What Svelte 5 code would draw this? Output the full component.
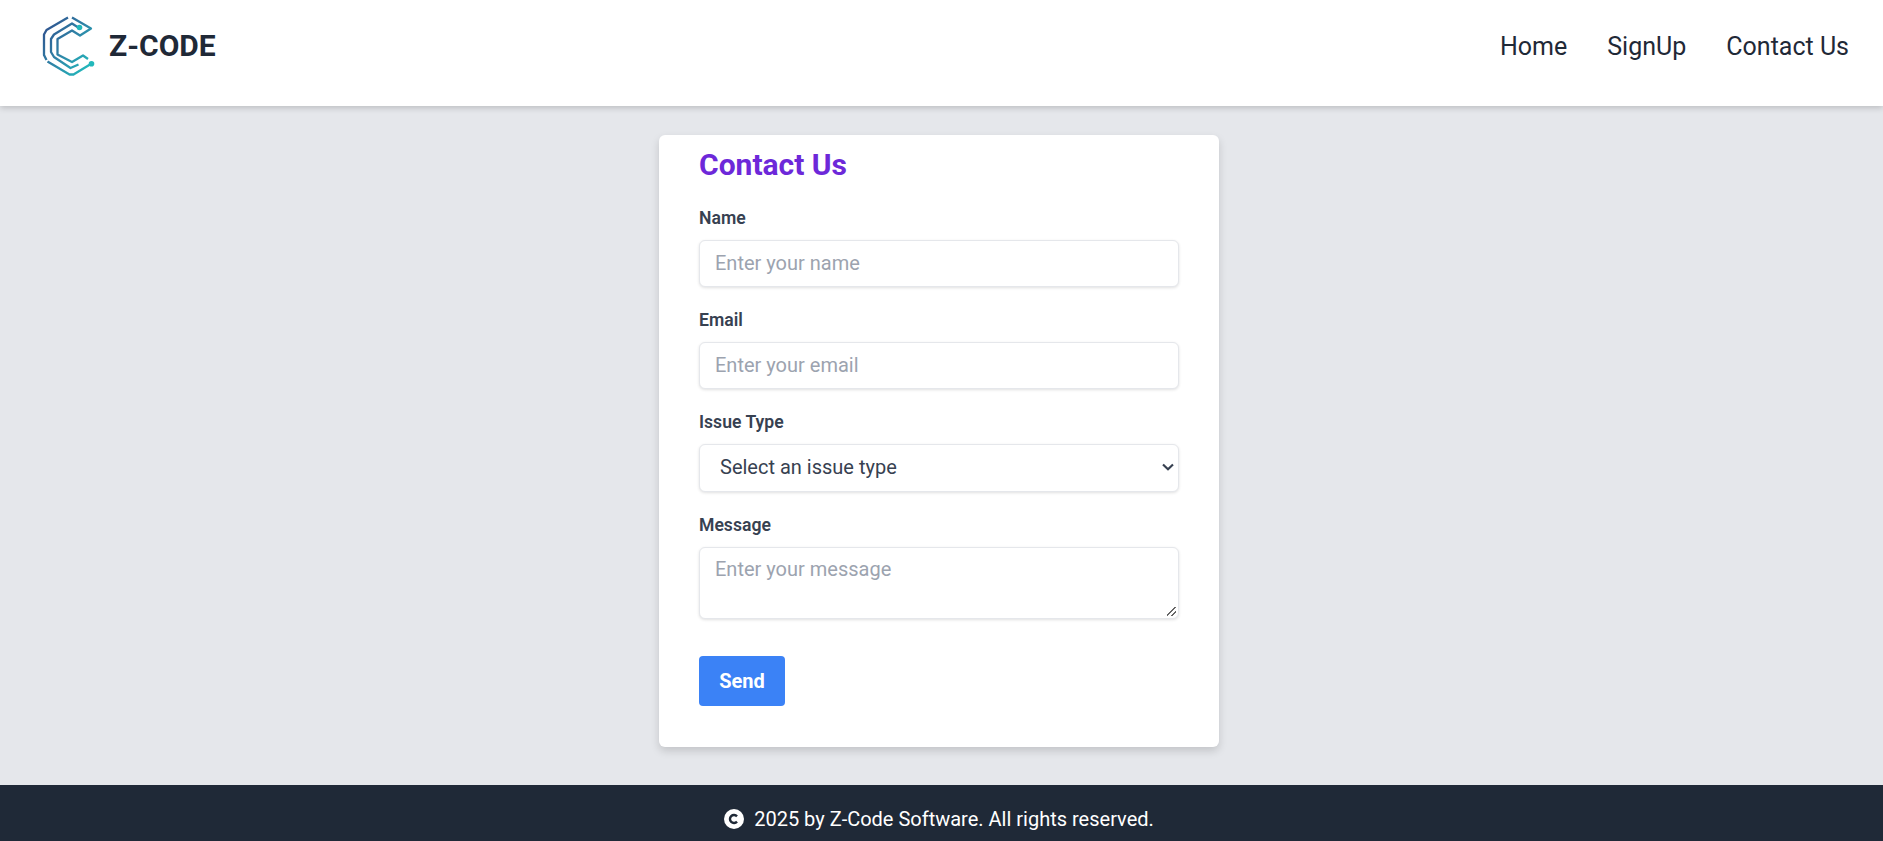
<script>
	let name = $state('');
	let email = $state('');
	let issue = $state('');
	let message = $state('');
</script>

<div class="page">
	<header class="topbar">
		<a class="brand" href="#home">
			<svg class="logo" viewBox="0 0 80 80" fill="none" aria-hidden="true">
				<defs>
					<linearGradient id="logoGrad" x1="14" y1="24" x2="60" y2="62" gradientUnits="userSpaceOnUse">
						<stop offset="0" stop-color="#2f5590" />
						<stop offset="0.5" stop-color="#2f86a8" />
						<stop offset="1" stop-color="#22b8bb" />
					</linearGradient>
				</defs>
				<g stroke="url(#logoGrad)" stroke-width="2.300" stroke-linejoin="round">
					<path d="M38 12.500 16.500 25 14 29.500v20.500l2.500 5" />
					<path d="M17.500 56.500 39.500 69.500h4L60 59.500" />
					<path d="M42 12.500 61 23.500 50 30.500 42 25.500 27.500 34v15.500L42 57 53 50.500 58 54" />
					<path d="M49 23 42 18.500 24 29.500 21 34v13l3 5 16.500 11 8-3.500" />
				</g>
				<circle cx="49.500" cy="22.500" r="2.800" fill="#22b8bb" />
				<circle cx="61.500" cy="58.700" r="2.800" fill="#22b8bb" />
			</svg>
			<span class="brand-name">Z-CODE</span>
		</a>
		<nav class="links">
			<a href="#home">Home</a>
			<a href="#signup">SignUp</a>
			<a href="#contact">Contact Us</a>
		</nav>
	</header>

	<main class="content">
		<form class="card" onsubmit={(e) => e.preventDefault()}>
			<h1>Contact Us</h1>

			<div class="field">
				<label for="name">Name</label>
				<input id="name" type="text" placeholder="Enter your name" bind:value={name} />
			</div>
			<div class="field">
				<label for="email">Email</label>
				<input id="email" type="email" placeholder="Enter your email" bind:value={email} />
			</div>
			<div class="field">
				<label for="issue">Issue Type</label>
				<div class="select-wrap">
					<select id="issue" bind:value={issue}>
						<option value="">Select an issue type</option>
						<option value="bug">Bug</option>
						<option value="billing">Billing</option>
						<option value="other">Other</option>
					</select>
					<svg class="chevron" viewBox="0 0 12 8" aria-hidden="true">
						<path d="M1 1.500 6 6.200 11 1.500" fill="none" stroke="#374151" stroke-width="2.200" />
					</svg>
				</div>
			</div>
			<div class="field">
				<label for="message">Message</label>
				<textarea id="message" rows="2" placeholder="Enter your message" bind:value={message}></textarea>
			</div>

			<button type="submit">Send</button>
		</form>
	</main>

	<footer class="bottom">
		<svg class="copy" viewBox="0 0 20 20" aria-hidden="true">
			<circle cx="10" cy="10" r="10" fill="#fff" />
			<path d="M13 7.400a4 4 0 1 0 0 5.200" fill="none" stroke="#1f2937" stroke-width="2.400" />
		</svg>
		<span>2025 by Z-Code Software. All rights reserved.</span>
	</footer>
</div>

<style>
	:global(body) {
		margin: 0;
		font-family: Roboto, "Liberation Sans", sans-serif;
		background: #e5e7eb;
	}

	.page {
		min-height: 841px;
		display: flex;
		flex-direction: column;
		box-sizing: border-box;
	}

	.topbar {
		height: 106px;
		box-sizing: border-box;
		background: #fff;
		display: flex;
		align-items: center;
		justify-content: space-between;
		padding: 0 34px 0 40px;
		box-shadow: 0 2px 6px rgba(0, 0, 0, 0.18);
		position: relative;
	}

	.brand {
		display: flex;
		align-items: center;
		gap: 9px;
		text-decoration: none;
		color: #1f2937;
		margin-top: -16px;
	}

	.logo {
		width: 80px;
		height: 80px;
		margin: 0 -10px;
	}

	.brand-name {
		font-size: 30px;
		font-weight: 700;
	}

	.links {
		display: flex;
		gap: 40px;
		margin-top: -14px;
	}

	.links a {
		color: #1f2937;
		text-decoration: none;
		font-size: 25px;
	}

	.content {
		flex: 1;
		display: flex;
		justify-content: center;
		align-items: flex-start;
		padding: 29px 5px 0 0;
	}

	.card {
		width: 560px;
		height: 612px;
		box-sizing: border-box;
		background: #fff;
		border-radius: 6px;
		padding: 0 40px;
		box-shadow: 0 4px 8px rgba(0, 0, 0, 0.15);
		display: flex;
		flex-direction: column;
	}

	h1 {
		margin: 12px 0 24px;
		font-size: 30px;
		line-height: 36px;
		font-weight: 700;
		color: #6d28d9;
	}

	.field {
		display: flex;
		flex-direction: column;
		margin-bottom: 22px;
	}

	label {
		font-size: 17.6px;
		line-height: 22px;
		font-weight: 600;
		color: #374151;
		margin-bottom: 11px;
	}

	input,
	select,
	textarea {
		box-sizing: border-box;
		width: 100%;
		font-family: inherit;
		font-size: 20px;
		color: #374151;
		background: #fff;
		border: 1.5px solid #e5e7eb;
		border-radius: 6px;
		padding: 8px 15px;
		box-shadow: 0 1px 3px rgba(0, 0, 0, 0.12);
		outline: none;
	}

	input {
		height: 47px;
		padding: 7px 15px 9px;
	}

	.select-wrap {
		position: relative;
	}

	select {
		display: block;
		height: 48px;
		padding: 7px 20px 9px;
		appearance: none;
	}

	.chevron {
		position: absolute;
		right: 5px;
		top: 19px;
		width: 12px;
		height: 8px;
		pointer-events: none;
	}

	textarea {
		height: 72px;
		display: block;
		padding-top: 9px;
	}

	textarea::-webkit-resizer {
		background: linear-gradient(135deg, transparent 40%, #666 40% 52%, transparent 52% 70%, #666 70% 82%, transparent 82%) no-repeat right 2px bottom 2px / 9px 9px;
	}

	::placeholder {
		color: #9ca3af;
		opacity: 1;
	}

	button {
		align-self: flex-start;
		margin-top: 15px;
		width: 86px;
		height: 50px;
		border: 0;
		border-radius: 4px;
		background: #3b82f6;
		color: #fff;
		font-family: inherit;
		font-size: 20px;
		font-weight: 700;
	}

	.bottom {
		height: 56px;
		box-sizing: border-box;
		background: #1f2937;
		color: #fff;
		display: flex;
		align-items: center;
		justify-content: center;
		gap: 10px;
		font-size: 20px;
		padding: 12px 5px 0 0;
	}

	.copy {
		width: 20px;
		height: 20px;
	}
</style>
